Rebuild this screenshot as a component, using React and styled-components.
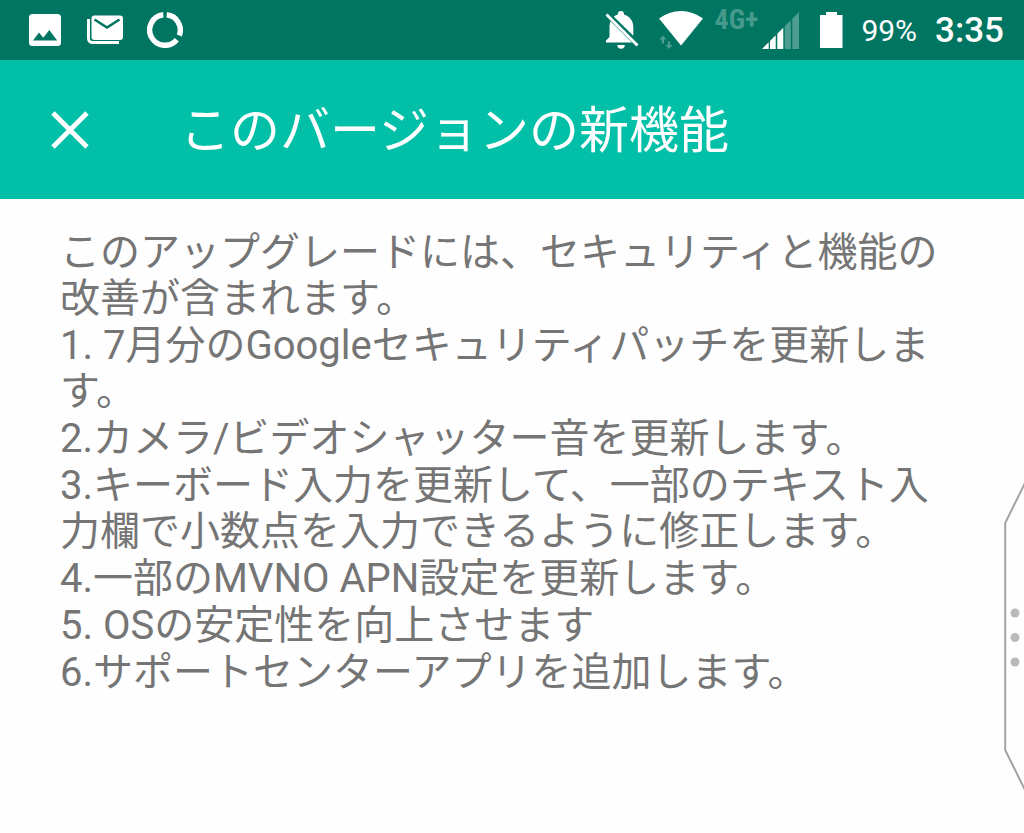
import styled, { createGlobalStyle } from "styled-components";

const GlobalStyle = createGlobalStyle`
	:root {
		--status-color: #007562;
		--bar-color: #02bfa7;
		--text-color: #757575;
		--handle-color: #a3a3a3;
		--faded-color: #4d9e91;
	}

	* {
		box-sizing: border-box;
	}

	body {
		margin: 0;
		background-color: #fefefe;
		font-family: Roboto, "Noto Sans CJK JP", sans-serif;
	}
`

const StatusBar = styled.div`
	display: flex;
	justify-content: space-between;
	align-items: center;
	height: 60px;
	padding: 0 20px 0 27px;
	background-color: var(--status-color);
	color: #fff;
`

const StatusGroup = styled.div`
	display: flex;
	align-items: center;
	gap: ${({$gap}) => $gap}px;
`

const Icon = styled.svg`
	display: block;
	flex: none;
`

const NetworkType = styled.span`
	align-self: flex-start;
	font-size: 28px;
	font-weight: 700;
	line-height: 16px;
	font-family: "Roboto Condensed", Roboto, sans-serif;
	color: #459a8c;
`

const Battery = styled.span`
	font-size: 30px;
	line-height: 36px;
	padding-top: 2px;
`

const Clock = styled.time`
	font-size: 35px;
	font-weight: 500;
	line-height: 36px;
	padding-top: 2px;
`

const AppBar = styled.header`
	display: flex;
	align-items: center;
	gap: 80px;
	min-height: 139px;
	padding: 0 40px;
	background-color: var(--bar-color);
	color: #fff;
`

const CloseButton = styled.button`
	display: flex;
	padding: 10px;
	border: 0;
	background: none;
	color: inherit;
	cursor: pointer;
`

const Title = styled.h1`
	margin: 0;
	padding-top: 2px;
	font-size: 50px;
	font-weight: 400;
	line-height: 60px;
`

const Notes = styled.main`
	display: flex;
	flex-direction: column;
	gap: 1px;
	padding: 31px 84px 60px 60px;
	color: var(--text-color);
`

const Note = styled.p`
	margin: 0;
	font-size: 40px;
	line-height: 46px;
`

const EdgeHandle = styled.button`
	position: fixed;
	right: 0;
	bottom: 42px;
	padding: 0;
	border: 0;
	background: none;
	cursor: pointer;
`

const notes = [
	"このアップグレードには、セキュリティと機能の改善が含まれます。",
	"1. 7月分のGoogleセキュリティパッチを更新します。",
	"2.カメラ/ビデオシャッター音を更新します。",
	"3.キーボード入力を更新して、一部のテキスト入力欄で小数点を入力できるように修正します。",
	"4.一部のMVNO APN設定を更新します。",
	"5. OSの安定性を向上させます",
	"6.サポートセンターアプリを追加します。",
]

function ImageIcon() {
	return <Icon width="36" height="36" viewBox="0 0 36 36" fill="currentColor" aria-hidden="true">
		<path fillRule="evenodd" d="M5.500 2h25a3.500 3.500 0 0 1 3.500 3.500v25a3.500 3.500 0 0 1-3.500 3.500h-25a3.500 3.500 0 0 1-3.500-3.500v-25A3.500 3.500 0 0 1 5.500 2zM6 28.500h24.200l-7.900-10.600-6 7.900-4.300-5.200z"/>
	</Icon>
}

function MailIcon() {
	return <Icon width="36" height="36" viewBox="0 0 36 36" fill="none" aria-hidden="true">
		<path d="M1.500 7v19.500a4 4 0 0 0 4 4H32" stroke="currentColor" strokeWidth="3"/>
		<rect x="4.500" y="3.500" width="31.500" height="24.500" rx="3" fill="currentColor"/>
		<path d="M7.500 7.500l12.500 8 12.500-8" stroke="var(--status-color)" strokeWidth="2.600"/>
	</Icon>
}

function DataIcon() {
	return <Icon width="36" height="36" viewBox="0 0 36 36" fill="none" stroke="currentColor" strokeWidth="5.400" aria-hidden="true">
		<path d="M19.700 2.800A15.300 15.300 0 0 1 32.300 23.500"/>
		<path d="M29.800 27.700A15.300 15.300 0 1 1 16.300 2.800"/>
	</Icon>
}

function BellOffIcon() {
	return <Icon width="36" height="38" viewBox="0 0 36 38" fill="currentColor" aria-hidden="true">
		<path d="M5.600 10.200L27 31.600H1v-2.100l3.500-3.500v-9.600c0-2.300.3-4.400 1.100-6.200z"/>
		<path d="M8.900 5.700c1.200-1 2.500-1.700 4-2.100V3a3 3 0 0 1 6 0v.6c5.700 1.300 9.400 6.400 9.400 12.400v8.700z"/>
		<path d="M12.400 34h7.400a3.700 3.700 0 0 1-7.400 0z"/>
		<path d="M1.500 3.500l31 31" stroke="currentColor" strokeWidth="2.800"/>
	</Icon>
}

function WifiIcon() {
	return <Icon width="44" height="38" viewBox="0 0 44 38" aria-hidden="true">
		<path d="M0 7.600Q10 0 22 0t22 7.600L22 34.500z" fill="currentColor"/>
		<path d="M3.900 24.500l3.600 4H5v4H2.800v-4H.3zM10 38l-3.600-4h2.500v-3.500h2.200V34h2.500z" fill="var(--faded-color)"/>
	</Icon>
}

function SignalIcon() {
	return <Icon width="37" height="37" viewBox="0 0 37 37" aria-hidden="true">
		<path d="M0 37l6.700-6.700V37zM8 29l5.700-5.700V37H8zM15.300 21.700l6-6V37h-6z" fill="currentColor"/>
		<path d="M22.800 14.200l6-6V37h-6zM30.300 6.700L37 0v37h-6.700z" fill="var(--faded-color)"/>
	</Icon>
}

function BatteryIcon() {
	return <Icon width="26" height="36" viewBox="0 0 26 36" fill="currentColor" aria-hidden="true">
		<path d="M9 0h11v3h5.500v33H3V3h6z"/>
	</Icon>
}

export default function App() {
	return <>
		<GlobalStyle/>
		<StatusBar>
			<StatusGroup $gap={24}>
				<ImageIcon/>
				<MailIcon/>
				<DataIcon/>
			</StatusGroup>
			<StatusGroup $gap={18}>
				<BellOffIcon/>
				<StatusGroup $gap={12}>
					<WifiIcon/>
					<StatusGroup $gap={4}>
						<NetworkType>4G+</NetworkType>
						<SignalIcon/>
					</StatusGroup>
				</StatusGroup>
				<BatteryIcon/>
				<Battery>99%</Battery>
				<Clock>3:35</Clock>
			</StatusGroup>
		</StatusBar>
		<AppBar>
			<CloseButton type="button" aria-label="閉じる">
				<Icon width="40" height="40" viewBox="0 0 40 40" stroke="currentColor" strokeWidth="4.800" aria-hidden="true">
					<path d="M3 3l34 34M37 3l-34 34"/>
				</Icon>
			</CloseButton>
			<Title>このバージョンの新機能</Title>
		</AppBar>
		<Notes lang="ja">
			{notes.map((note) => <Note key={note}>{note}</Note>)}
		</Notes>
		<EdgeHandle type="button" aria-label="エッジパネル">
			<Icon width="20" height="308" viewBox="0 0 20 308" fill="none" aria-hidden="true">
				<path d="M21 0L1.200 40v227L21 307" stroke="var(--handle-color)" strokeWidth="2"/>
				<circle cx="11" cy="130" r="4.500" fill="#bababa"/>
				<circle cx="11" cy="154.500" r="4.500" fill="#bababa"/>
				<circle cx="11" cy="179" r="4.500" fill="#bababa"/>
			</Icon>
		</EdgeHandle>
	</>
}
